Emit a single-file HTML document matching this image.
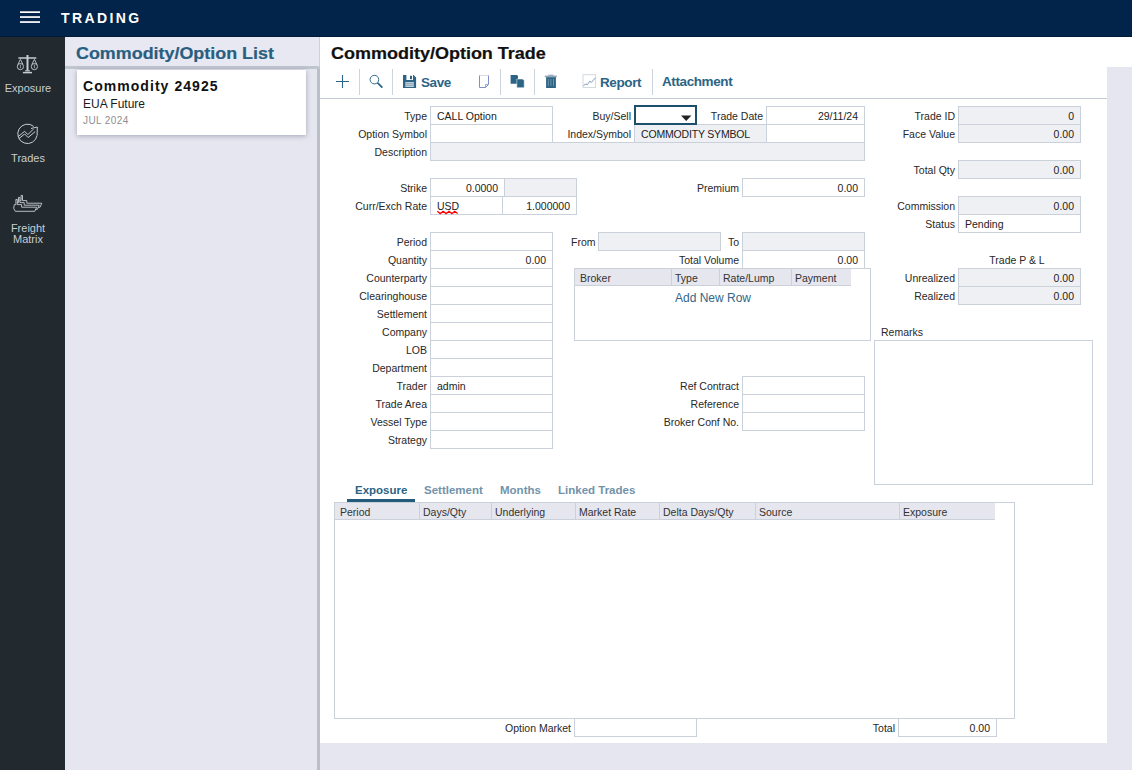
<!DOCTYPE html><html><head><meta charset="utf-8"><style>
html,body{margin:0;padding:0;}
body{width:1132px;height:770px;overflow:hidden;position:relative;background:#e6e6f0;font-family:'Liberation Sans', sans-serif;}
.a{position:absolute;}
.t{position:absolute;white-space:nowrap;font-family:'Liberation Sans', sans-serif;}
svg{position:absolute;overflow:visible;}
</style></head><body>
<div class="a" style="left:0px;top:0px;width:1132px;height:37px;background:#03244a;"></div>
<div class="a" style="left:0px;top:36px;width:1132px;height:1px;background:#001a3a;"></div>
<svg style="left:0;top:0" width="60" height="37" viewBox="0 0 60 37"><rect x="20" y="11.3" width="20" height="1.7" fill="#fff"/><rect x="20" y="16.2" width="20" height="1.7" fill="#fff"/><rect x="20" y="21.2" width="20" height="1.7" fill="#fff"/></svg>
<div class="t" style="left:61px;top:8px;font-size:14px;font-weight:bold;color:#ffffff;line-height:20px;letter-spacing:2.4px;">TRADING</div>
<div class="a" style="left:0px;top:37px;width:65px;height:733px;background:#22292f;"></div>
<svg style="left:0;top:0" width="65" height="260" viewBox="0 0 65 260">
<g fill="none" stroke="#c9cdd2" stroke-width="1">
<path d="M18.4 58h17.9" stroke-width="1.5"/>
<path d="M27.5 55v15.5" stroke-width="2"/>
<path d="M25.2 70.8h4.6" stroke-width="1.2"/>
<path d="M22.9 72.6h9.1" stroke-width="1.5"/>
<path d="M20.4 59.4L17.9 64.4M20.4 59.4L22.9 64.4M34.4 59.4L31.9 64.4M34.4 59.4L36.9 64.4" stroke-width="0.9"/>
<circle cx="20.4" cy="66.6" r="3.1" stroke-width="0.9"/>
<circle cx="34.4" cy="66.6" r="3.1" stroke-width="0.9"/>
<path d="M20.4 64.6v3.6M34.4 64.6v3.6" stroke-width="0.7"/>
</g>
<g fill="none" stroke="#c9cdd2" stroke-width="1">
<path d="M37.05 135.5A9.7 9.7 0 1 1 33.7 126.4"/>
<path d="M18.1 136.7L24.6 131.3L27.9 134.6L33.3 129.2"/>
<path d="M18.7 138.8L24.6 134L28.1 137.5L35.2 131.6"/>
<path d="M31 128.5L37.3 127L37.1 135.4"/>
</g>
<path d="M19.6 200.6H21.1V195.4H22.5V200.6H26.8V203.2H41.8L40.0 207.3H20.5L18.8 204.2z" fill="#22292f" stroke="#c9cdd2" stroke-width="0.9"/><path d="M17.0 202.6H18.5V197.4H19.9V202.6H24.2V205.2H39.2L37.4 209.3H17.9L16.2 206.2z" fill="#22292f" stroke="#c9cdd2" stroke-width="0.9"/><path d="M14.4 204.6H15.9V199.4H17.3V204.6H21.6V207.2H36.6L34.8 211.3H15.3L13.6 208.2z" fill="#22292f" stroke="#c9cdd2" stroke-width="0.9"/>
</svg>
<div class="t" style="left:-122px;width:300px;text-align:center;top:78px;font-size:11px;font-weight:normal;color:#c9cdd2;line-height:20px;">Exposure</div>
<div class="t" style="left:-122px;width:300px;text-align:center;top:148px;font-size:11px;font-weight:normal;color:#c9cdd2;line-height:20px;">Trades</div>
<div class="t" style="left:-122px;width:300px;text-align:center;top:218px;font-size:11px;font-weight:normal;color:#c9cdd2;line-height:20px;">Freight</div>
<div class="t" style="left:-122px;width:300px;text-align:center;top:229px;font-size:11px;font-weight:normal;color:#c9cdd2;line-height:20px;">Matrix</div>
<div class="a" style="left:65px;top:37px;width:255px;height:733px;background:#e6e6f0;"></div>
<div class="a" style="left:65px;top:37px;width:254px;height:29px;background:#e7e8f1;"></div>
<div class="a" style="left:65px;top:66px;width:255px;height:3px;background:#c0c6cf;"></div>
<div class="a" style="left:319px;top:37px;width:1px;height:30px;background:#ccd1da;"></div>
<div class="a" style="left:317px;top:69px;width:3px;height:701px;background:#b9bec8;"></div>
<div class="t" style="left:76px;top:43px;font-size:16.5px;font-weight:bold;color:#285e80;line-height:20px;transform:scaleX(1.085);transform-origin:0 0;-webkit-text-stroke:0.2px #285e80;">Commodity/Option List</div>
<div class="a" style="left:77px;top:70px;width:229px;height:65px;background:#fff;box-shadow:0 1px 5px rgba(50,60,85,0.38);"></div>
<div class="t" style="left:83px;top:76px;font-size:14px;font-weight:bold;color:#111;line-height:20px;letter-spacing:1.05px;">Commodity 24925</div>
<div class="t" style="left:83px;top:94px;font-size:12px;font-weight:normal;color:#1a1a1a;line-height:20px;">EUA Future</div>
<div class="t" style="left:83px;top:111px;font-size:10px;font-weight:normal;color:#8f8f8f;line-height:20px;letter-spacing:0.4px;">JUL 2024</div>
<div class="a" style="left:320px;top:37px;width:812px;height:30px;background:#ffffff;"></div>
<div class="a" style="left:320px;top:67px;width:787px;height:676px;background:#ffffff;"></div>
<div class="t" style="left:331px;top:43px;font-size:16.5px;font-weight:bold;color:#111;line-height:20px;transform:scaleX(1.09);transform-origin:0 0;-webkit-text-stroke:0.2px #111;">Commodity/Option Trade</div>
<div class="a" style="left:320px;top:98px;width:787px;height:1px;background:#c3cad4;"></div>
<div class="a" style="left:359px;top:69px;width:1px;height:26px;background:#cdd4de;"></div>
<div class="a" style="left:392px;top:69px;width:1px;height:26px;background:#cdd4de;"></div>
<div class="a" style="left:500px;top:69px;width:1px;height:26px;background:#cdd4de;"></div>
<div class="a" style="left:534px;top:69px;width:1px;height:26px;background:#cdd4de;"></div>
<div class="a" style="left:652px;top:69px;width:1px;height:26px;background:#cdd4de;"></div>
<svg style="left:0;top:0" width="800" height="100" viewBox="0 0 800 100">
<path d="M336 81.5h13M342.5 75v13" stroke="#2b6485" stroke-width="1.1" fill="none"/>
<circle cx="374.4" cy="79.6" r="4.3" stroke="#2b6485" stroke-width="0.95" fill="none"/>
<path d="M377.6 82.8l4.8 4.8" stroke="#2b6485" stroke-width="1.8" fill="none"/>
<path d="M403 75h10.5l2.6 2.6V88H403z" fill="#2b6485"/>
<rect x="406.4" y="75" width="6.6" height="5" fill="#fff"/>
<rect x="410" y="75.8" width="2" height="3.4" fill="#2b6485"/>
<rect x="405.3" y="82" width="8.6" height="5" fill="#c3d0db"/>
<path d="M405.3 83.6h8.6M405.3 85.3h8.6" stroke="#6f8ea6" stroke-width="0.6"/>
<path d="M479.5 75.5h9v9l-3 3h-6z" fill="#fff" stroke="#7d8fc6" stroke-width="1"/>
<path d="M479.5 75.5h9" stroke="#d8dde4" stroke-width="1"/>
<path d="M488.5 84.5h-3v3" fill="none" stroke="#7d8fc6" stroke-width="0.8"/>
<path d="M510.6 75h6.4l1 1v7.8h-7.4z" fill="#2b6485"/>
<path d="M516.8 79h5.8l1.6 1.6v7.1h-7.4z" fill="#2b6485" stroke="#fff" stroke-width="0.5"/>
<rect x="544.8" y="75.6" width="12" height="1.6" fill="#8fa3b3"/>
<rect x="548.4" y="74.6" width="5" height="1.4" fill="#9fb0bf"/>
<path d="M546.1 77.2h9.8V88h-9.8z" fill="#2b6485"/>
<path d="M548.3 79v7.2M550.9 79v7.2M553.5 79v7.2" stroke="#8fa8ba" stroke-width="0.7"/>
<rect x="583" y="74.7" width="12.6" height="12.8" fill="none" stroke="#d3d9e2" stroke-width="1"/>
<path d="M583.4 85.6l2.4-1.6 1.6 0.6 2.4-3.4 1.6 1.2 4-4.6" fill="none" stroke="#7491b6" stroke-width="0.9"/>
</svg>
<div class="t" style="left:421px;top:73px;font-size:13.5px;font-weight:bold;color:#2b6485;line-height:20px;letter-spacing:-0.4px;">Save</div>
<div class="t" style="left:600px;top:73px;font-size:13.5px;font-weight:bold;color:#2b6485;line-height:20px;letter-spacing:-0.4px;">Report</div>
<div class="t" style="left:662px;top:72px;font-size:13.5px;font-weight:bold;color:#2b6485;line-height:20px;letter-spacing:-0.4px;">Attachment</div>
<div class="t" style="right:705px;text-align:right;top:106px;font-size:10.5px;font-weight:normal;color:#282828;line-height:20px;">Type</div>
<div class="a" style="left:430px;top:106px;width:123px;height:19px;background:#fff;border:1px solid #cbd1da;box-sizing:border-box;"></div>
<div class="t" style="left:437px;top:106px;font-size:10.5px;font-weight:normal;color:#222;line-height:20px;">CALL Option</div>
<div class="t" style="right:705px;text-align:right;top:124px;font-size:10.5px;font-weight:normal;color:#282828;line-height:20px;">Option Symbol</div>
<div class="a" style="left:430px;top:124px;width:123px;height:19px;background:#fff;border:1px solid #cbd1da;box-sizing:border-box;"></div>
<div class="t" style="right:705px;text-align:right;top:142px;font-size:10.5px;font-weight:normal;color:#282828;line-height:20px;">Description</div>
<div class="a" style="left:430px;top:142px;width:435px;height:19px;background:#eff0f3;border:1px solid #cbd1da;box-sizing:border-box;"></div>
<div class="t" style="right:705px;text-align:right;top:178px;font-size:10.5px;font-weight:normal;color:#282828;line-height:20px;">Strike</div>
<div class="a" style="left:430px;top:178px;width:75px;height:19px;background:#fff;border:1px solid #cbd1da;box-sizing:border-box;"></div>
<div class="t" style="right:634px;text-align:right;top:178px;font-size:10.5px;font-weight:normal;color:#222;line-height:20px;">0.0000</div>
<div class="a" style="left:504px;top:178px;width:73px;height:19px;background:#eff0f3;border:1px solid #cbd1da;box-sizing:border-box;"></div>
<div class="t" style="right:705px;text-align:right;top:196px;font-size:10.5px;font-weight:normal;color:#282828;line-height:20px;">Curr/Exch Rate</div>
<div class="a" style="left:430px;top:196px;width:73px;height:19px;background:#fff;border:1px solid #cbd1da;box-sizing:border-box;"></div>
<div class="t" style="left:437px;top:196px;font-size:10.5px;font-weight:normal;color:#222;line-height:20px;">USD</div>
<div class="a" style="left:502px;top:196px;width:75px;height:19px;background:#fff;border:1px solid #cbd1da;box-sizing:border-box;"></div>
<div class="t" style="right:562px;text-align:right;top:196px;font-size:10.5px;font-weight:normal;color:#222;line-height:20px;">1.000000</div>
<svg style="left:0;top:0" width="500" height="220" viewBox="0 0 500 220"><path d="M437.3 211.3L440.2 213.6L443.1 211.3L446.1 213.6L449 211.3L451.9 213.6L454.8 211.3L457.6 213.6" fill="none" stroke="#ff0000" stroke-width="1.3"/></svg>
<div class="t" style="right:705px;text-align:right;top:232px;font-size:10.5px;font-weight:normal;color:#282828;line-height:20px;">Period</div>
<div class="a" style="left:430px;top:232px;width:123px;height:19px;background:#fff;border:1px solid #cbd1da;box-sizing:border-box;"></div>
<div class="t" style="right:705px;text-align:right;top:250px;font-size:10.5px;font-weight:normal;color:#282828;line-height:20px;">Quantity</div>
<div class="a" style="left:430px;top:250px;width:123px;height:19px;background:#fff;border:1px solid #cbd1da;box-sizing:border-box;"></div>
<div class="t" style="right:586px;text-align:right;top:250px;font-size:10.5px;font-weight:normal;color:#222;line-height:20px;">0.00</div>
<div class="t" style="right:705px;text-align:right;top:268px;font-size:10.5px;font-weight:normal;color:#282828;line-height:20px;">Counterparty</div>
<div class="a" style="left:430px;top:268px;width:123px;height:19px;background:#fff;border:1px solid #cbd1da;box-sizing:border-box;"></div>
<div class="t" style="right:705px;text-align:right;top:286px;font-size:10.5px;font-weight:normal;color:#282828;line-height:20px;">Clearinghouse</div>
<div class="a" style="left:430px;top:286px;width:123px;height:19px;background:#fff;border:1px solid #cbd1da;box-sizing:border-box;"></div>
<div class="t" style="right:705px;text-align:right;top:304px;font-size:10.5px;font-weight:normal;color:#282828;line-height:20px;">Settlement</div>
<div class="a" style="left:430px;top:304px;width:123px;height:19px;background:#fff;border:1px solid #cbd1da;box-sizing:border-box;"></div>
<div class="t" style="right:705px;text-align:right;top:322px;font-size:10.5px;font-weight:normal;color:#282828;line-height:20px;">Company</div>
<div class="a" style="left:430px;top:322px;width:123px;height:19px;background:#fff;border:1px solid #cbd1da;box-sizing:border-box;"></div>
<div class="t" style="right:705px;text-align:right;top:340px;font-size:10.5px;font-weight:normal;color:#282828;line-height:20px;">LOB</div>
<div class="a" style="left:430px;top:340px;width:123px;height:19px;background:#fff;border:1px solid #cbd1da;box-sizing:border-box;"></div>
<div class="t" style="right:705px;text-align:right;top:358px;font-size:10.5px;font-weight:normal;color:#282828;line-height:20px;">Department</div>
<div class="a" style="left:430px;top:358px;width:123px;height:19px;background:#fff;border:1px solid #cbd1da;box-sizing:border-box;"></div>
<div class="t" style="right:705px;text-align:right;top:376px;font-size:10.5px;font-weight:normal;color:#282828;line-height:20px;">Trader</div>
<div class="a" style="left:430px;top:376px;width:123px;height:19px;background:#fff;border:1px solid #cbd1da;box-sizing:border-box;"></div>
<div class="t" style="left:437px;top:376px;font-size:10.5px;font-weight:normal;color:#222;line-height:20px;">admin</div>
<div class="t" style="right:705px;text-align:right;top:394px;font-size:10.5px;font-weight:normal;color:#282828;line-height:20px;">Trade Area</div>
<div class="a" style="left:430px;top:394px;width:123px;height:19px;background:#fff;border:1px solid #cbd1da;box-sizing:border-box;"></div>
<div class="t" style="right:705px;text-align:right;top:412px;font-size:10.5px;font-weight:normal;color:#282828;line-height:20px;">Vessel Type</div>
<div class="a" style="left:430px;top:412px;width:123px;height:19px;background:#fff;border:1px solid #cbd1da;box-sizing:border-box;"></div>
<div class="t" style="right:705px;text-align:right;top:430px;font-size:10.5px;font-weight:normal;color:#282828;line-height:20px;">Strategy</div>
<div class="a" style="left:430px;top:430px;width:123px;height:19px;background:#fff;border:1px solid #cbd1da;box-sizing:border-box;"></div>
<div class="t" style="right:501px;text-align:right;top:106px;font-size:10.5px;font-weight:normal;color:#282828;line-height:20px;">Buy/Sell</div>
<div class="t" style="right:501px;text-align:right;top:124px;font-size:10.5px;font-weight:normal;color:#282828;line-height:20px;">Index/Symbol</div>
<div class="a" style="left:634px;top:124px;width:133px;height:19px;background:#eff0f3;border:1px solid #cbd1da;box-sizing:border-box;"></div>
<div class="t" style="left:641px;top:124px;font-size:10.5px;font-weight:normal;color:#222;line-height:20px;letter-spacing:-0.18px;">COMMODITY SYMBOL</div>
<div class="a" style="left:766px;top:124px;width:99px;height:19px;background:#fff;border:1px solid #cbd1da;box-sizing:border-box;"></div>
<div class="a" style="left:634px;top:105px;width:63px;height:20px;background:#fff;border:2px solid #1d4e6c;box-sizing:border-box;"></div>
<svg style="left:681px;top:115px" width="11" height="7" viewBox="0 0 11 7"><path d="M0 0.6h10.4L5.2 6z" fill="#222"/></svg>
<div class="t" style="right:369px;text-align:right;top:106px;font-size:10.5px;font-weight:normal;color:#282828;line-height:20px;">Trade Date</div>
<div class="a" style="left:766px;top:106px;width:99px;height:19px;background:#fff;border:1px solid #cbd1da;box-sizing:border-box;"></div>
<div class="t" style="right:274px;text-align:right;top:106px;font-size:10.5px;font-weight:normal;color:#222;line-height:20px;">29/11/24</div>
<div class="t" style="right:393px;text-align:right;top:178px;font-size:10.5px;font-weight:normal;color:#282828;line-height:20px;">Premium</div>
<div class="a" style="left:742px;top:178px;width:123px;height:19px;background:#fff;border:1px solid #cbd1da;box-sizing:border-box;"></div>
<div class="t" style="right:274px;text-align:right;top:178px;font-size:10.5px;font-weight:normal;color:#222;line-height:20px;">0.00</div>
<div class="t" style="left:571px;top:232px;font-size:10.5px;font-weight:normal;color:#282828;line-height:20px;">From</div>
<div class="a" style="left:598px;top:232px;width:123px;height:19px;background:#eff0f3;border:1px solid #cbd1da;box-sizing:border-box;"></div>
<div class="t" style="right:393px;text-align:right;top:232px;font-size:10.5px;font-weight:normal;color:#282828;line-height:20px;">To</div>
<div class="a" style="left:742px;top:232px;width:123px;height:19px;background:#eff0f3;border:1px solid #cbd1da;box-sizing:border-box;"></div>
<div class="t" style="right:393px;text-align:right;top:250px;font-size:10.5px;font-weight:normal;color:#282828;line-height:20px;">Total Volume</div>
<div class="a" style="left:742px;top:250px;width:123px;height:19px;background:#fff;border:1px solid #cbd1da;box-sizing:border-box;"></div>
<div class="t" style="right:274px;text-align:right;top:250px;font-size:10.5px;font-weight:normal;color:#222;line-height:20px;">0.00</div>
<div class="a" style="left:574px;top:268px;width:297px;height:73px;background:#fff;border:1px solid #cbd1da;box-sizing:border-box;"></div>
<div class="a" style="left:575px;top:269px;width:276px;height:17px;background:#e5e6ee;"></div>
<div class="a" style="left:575px;top:285px;width:276px;height:1px;background:#cbd1da;"></div>
<div class="a" style="left:671px;top:269px;width:1px;height:17px;background:#cbd1da;"></div>
<div class="a" style="left:719px;top:269px;width:1px;height:17px;background:#cbd1da;"></div>
<div class="a" style="left:791px;top:269px;width:1px;height:17px;background:#cbd1da;"></div>
<div class="t" style="left:580px;top:268px;font-size:10.5px;font-weight:normal;color:#333;line-height:20px;">Broker</div>
<div class="t" style="left:675px;top:268px;font-size:10.5px;font-weight:normal;color:#333;line-height:20px;">Type</div>
<div class="t" style="left:723px;top:268px;font-size:10.5px;font-weight:normal;color:#333;line-height:20px;">Rate/Lump</div>
<div class="t" style="left:795px;top:268px;font-size:10.5px;font-weight:normal;color:#333;line-height:20px;">Payment</div>
<div class="t" style="left:563px;width:300px;text-align:center;top:288px;font-size:12px;font-weight:normal;color:#336688;line-height:20px;">Add New Row</div>
<div class="t" style="right:393px;text-align:right;top:376px;font-size:10.5px;font-weight:normal;color:#282828;line-height:20px;">Ref Contract</div>
<div class="a" style="left:742px;top:376px;width:123px;height:19px;background:#fff;border:1px solid #cbd1da;box-sizing:border-box;"></div>
<div class="t" style="right:393px;text-align:right;top:394px;font-size:10.5px;font-weight:normal;color:#282828;line-height:20px;">Reference</div>
<div class="a" style="left:742px;top:394px;width:123px;height:19px;background:#fff;border:1px solid #cbd1da;box-sizing:border-box;"></div>
<div class="t" style="right:393px;text-align:right;top:412px;font-size:10.5px;font-weight:normal;color:#282828;line-height:20px;">Broker Conf No.</div>
<div class="a" style="left:742px;top:412px;width:123px;height:19px;background:#fff;border:1px solid #cbd1da;box-sizing:border-box;"></div>
<div class="t" style="right:177px;text-align:right;top:106px;font-size:10.5px;font-weight:normal;color:#282828;line-height:20px;">Trade ID</div>
<div class="a" style="left:958px;top:106px;width:123px;height:19px;background:#eff0f3;border:1px solid #cbd1da;box-sizing:border-box;"></div>
<div class="t" style="right:58px;text-align:right;top:106px;font-size:10.5px;font-weight:normal;color:#222;line-height:20px;">0</div>
<div class="t" style="right:177px;text-align:right;top:124px;font-size:10.5px;font-weight:normal;color:#282828;line-height:20px;">Face Value</div>
<div class="a" style="left:958px;top:124px;width:123px;height:19px;background:#eff0f3;border:1px solid #cbd1da;box-sizing:border-box;"></div>
<div class="t" style="right:58px;text-align:right;top:124px;font-size:10.5px;font-weight:normal;color:#222;line-height:20px;">0.00</div>
<div class="t" style="right:177px;text-align:right;top:160px;font-size:10.5px;font-weight:normal;color:#282828;line-height:20px;">Total Qty</div>
<div class="a" style="left:958px;top:160px;width:123px;height:19px;background:#eff0f3;border:1px solid #cbd1da;box-sizing:border-box;"></div>
<div class="t" style="right:58px;text-align:right;top:160px;font-size:10.5px;font-weight:normal;color:#222;line-height:20px;">0.00</div>
<div class="t" style="right:177px;text-align:right;top:196px;font-size:10.5px;font-weight:normal;color:#282828;line-height:20px;">Commission</div>
<div class="a" style="left:958px;top:196px;width:123px;height:19px;background:#eff0f3;border:1px solid #cbd1da;box-sizing:border-box;"></div>
<div class="t" style="right:58px;text-align:right;top:196px;font-size:10.5px;font-weight:normal;color:#222;line-height:20px;">0.00</div>
<div class="t" style="right:177px;text-align:right;top:214px;font-size:10.5px;font-weight:normal;color:#282828;line-height:20px;">Status</div>
<div class="a" style="left:958px;top:214px;width:123px;height:19px;background:#fff;border:1px solid #cbd1da;box-sizing:border-box;"></div>
<div class="t" style="left:965px;top:214px;font-size:10.5px;font-weight:normal;color:#222;line-height:20px;">Pending</div>
<div class="t" style="left:867px;width:300px;text-align:center;top:250px;font-size:10.5px;font-weight:normal;color:#282828;line-height:20px;">Trade P &amp; L</div>
<div class="t" style="right:177px;text-align:right;top:268px;font-size:10.5px;font-weight:normal;color:#282828;line-height:20px;">Unrealized</div>
<div class="a" style="left:958px;top:268px;width:123px;height:19px;background:#eff0f3;border:1px solid #cbd1da;box-sizing:border-box;"></div>
<div class="t" style="right:58px;text-align:right;top:268px;font-size:10.5px;font-weight:normal;color:#222;line-height:20px;">0.00</div>
<div class="t" style="right:177px;text-align:right;top:286px;font-size:10.5px;font-weight:normal;color:#282828;line-height:20px;">Realized</div>
<div class="a" style="left:958px;top:286px;width:123px;height:19px;background:#eff0f3;border:1px solid #cbd1da;box-sizing:border-box;"></div>
<div class="t" style="right:58px;text-align:right;top:286px;font-size:10.5px;font-weight:normal;color:#222;line-height:20px;">0.00</div>
<div class="t" style="left:881px;top:322px;font-size:10.5px;font-weight:normal;color:#282828;line-height:20px;">Remarks</div>
<div class="a" style="left:874px;top:340px;width:219px;height:145px;background:#fff;border:1px solid #cbd1da;box-sizing:border-box;"></div>
<div class="t" style="left:355px;top:480px;font-size:11.5px;font-weight:bold;color:#2b6485;line-height:20px;">Exposure</div>
<div class="t" style="left:424px;top:480px;font-size:11.5px;font-weight:bold;color:#7393aa;line-height:20px;">Settlement</div>
<div class="t" style="left:500px;top:480px;font-size:11.5px;font-weight:bold;color:#7393aa;line-height:20px;">Months</div>
<div class="t" style="left:558px;top:480px;font-size:11.5px;font-weight:bold;color:#7393aa;line-height:20px;">Linked Trades</div>
<div class="a" style="left:347px;top:499px;width:68px;height:3px;background:#245b7a;"></div>
<div class="a" style="left:334px;top:502px;width:681px;height:217px;background:#fff;border:1px solid #cbd1da;box-sizing:border-box;"></div>
<div class="a" style="left:335px;top:503px;width:660px;height:17px;background:#e5e6ee;"></div>
<div class="a" style="left:335px;top:519px;width:660px;height:1px;background:#cbd1da;"></div>
<div class="t" style="left:340px;top:502px;font-size:10.5px;font-weight:normal;color:#333;line-height:20px;">Period</div>
<div class="a" style="left:419px;top:503px;width:1px;height:17px;background:#cbd1da;"></div>
<div class="t" style="left:423px;top:502px;font-size:10.5px;font-weight:normal;color:#333;line-height:20px;">Days/Qty</div>
<div class="a" style="left:491px;top:503px;width:1px;height:17px;background:#cbd1da;"></div>
<div class="t" style="left:495px;top:502px;font-size:10.5px;font-weight:normal;color:#333;line-height:20px;">Underlying</div>
<div class="a" style="left:575px;top:503px;width:1px;height:17px;background:#cbd1da;"></div>
<div class="t" style="left:579px;top:502px;font-size:10.5px;font-weight:normal;color:#333;line-height:20px;">Market Rate</div>
<div class="a" style="left:659px;top:503px;width:1px;height:17px;background:#cbd1da;"></div>
<div class="t" style="left:663px;top:502px;font-size:10.5px;font-weight:normal;color:#333;line-height:20px;">Delta Days/Qty</div>
<div class="a" style="left:755px;top:503px;width:1px;height:17px;background:#cbd1da;"></div>
<div class="t" style="left:759px;top:502px;font-size:10.5px;font-weight:normal;color:#333;line-height:20px;">Source</div>
<div class="a" style="left:899px;top:503px;width:1px;height:17px;background:#cbd1da;"></div>
<div class="t" style="left:903px;top:502px;font-size:10.5px;font-weight:normal;color:#333;line-height:20px;">Exposure</div>
<div class="t" style="right:561px;text-align:right;top:718px;font-size:10.5px;font-weight:normal;color:#282828;line-height:20px;">Option Market</div>
<div class="a" style="left:574px;top:718px;width:123px;height:19px;background:#fff;border:1px solid #cbd1da;box-sizing:border-box;"></div>
<div class="t" style="right:237px;text-align:right;top:718px;font-size:10.5px;font-weight:normal;color:#282828;line-height:20px;">Total</div>
<div class="a" style="left:898px;top:718px;width:99px;height:19px;background:#fff;border:1px solid #cbd1da;box-sizing:border-box;"></div>
<div class="t" style="right:142px;text-align:right;top:718px;font-size:10.5px;font-weight:normal;color:#222;line-height:20px;">0.00</div>
</body></html>
